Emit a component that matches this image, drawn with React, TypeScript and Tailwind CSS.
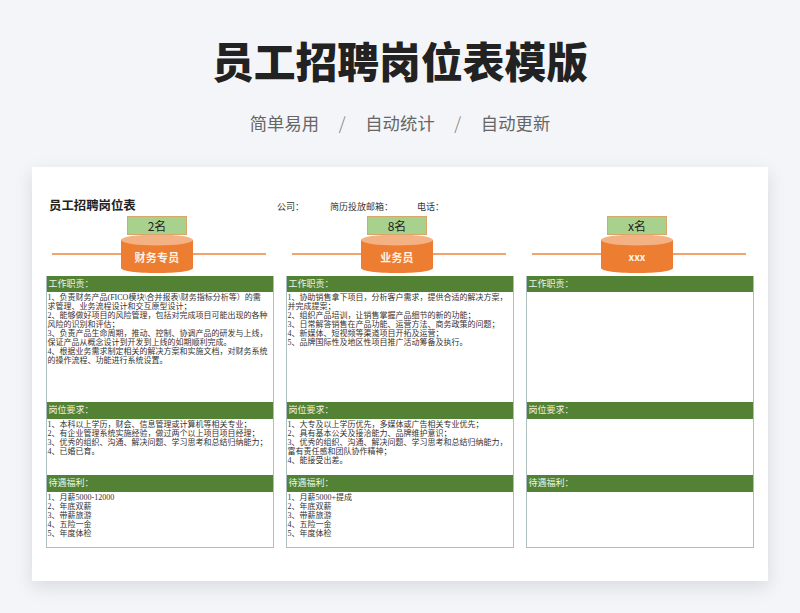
type Col = { count: string; name: string; duty: string[]; req: string[]; ben: string[]; nameClass: string };
const cols: Col[] = [
  {
    count: "2名",
    name: "财务专员",
    nameClass: "text-[11px] tracking-[0.2px]",
    duty: [
      "1、负责财务产品(FICO模块\\合并报表\\财务指标分析等）的需",
      "求管理、业务流程设计和交互原型设计；",
      "2、能够做好项目的风险管理，包括对完成项目可能出现的各种",
      "风险的识别和评估；",
      "3、负责产品生命周期，推动、控制、协调产品的研发与上线，",
      "保证产品从概念设计到开发到上线的如期顺利完成。",
      "4、根据业务需求制定相关的解决方案和实施文档，对财务系统",
      "的操作流程、功能进行系统设置。",
    ],
    req: [
      "1、本科以上学历，财会、信息管理或计算机等相关专业；",
      "2、有企业管理系统实施经验，做过两个以上项目项目经理；",
      "3、优秀的组织、沟通、解决问题、学习思考和总结归纳能力；",
      "4、已婚已育。",
    ],
    ben: ["1、月薪5000-12000", "2、年底双薪", "3、带薪旅游", "4、五险一金", "5、年度体检"],
  },
  {
    count: "8名",
    name: "业务员",
    nameClass: "text-[11px] tracking-[0.2px]",
    duty: [
      "1、协助销售拿下项目，分析客户需求，提供合适的解决方案，",
      "并完成提案；",
      "2、组织产品培训，让销售掌握产品细节的新的功能；",
      "3、日常解答销售在产品功能、运营方法、商务政策的问题；",
      "4、新媒体、短视频等渠道项目开拓及运营；",
      "5、品牌国际性及地区性项目推广活动筹备及执行。",
    ],
    req: [
      "1、大专及以上学历优先，多媒体或广告相关专业优先；",
      "2、具有基本公关及接洽能力、品牌维护意识；",
      "3、优秀的组织、沟通、解决问题、学习思考和总结归纳能力，",
      "富有责任感和团队协作精神；",
      "4、能接受出差。",
    ],
    ben: ["1、月薪5000+提成", "2、年底双薪", "3、带薪旅游", "4、五险一金", "5、年度体检"],
  },
  { count: "x名", name: "xxx", nameClass: "text-[10px]", duty: [], req: [], ben: [] },
];

const cellFont = { fontFamily: '"Liberation Serif", "Noto Sans CJK SC", serif' };

function Section({ title, lines, head, h, pad }: { title: string; lines: string[]; head: string; h: string; pad: string }) {
  return (
    <>
      <div
        className={`${head} bg-[#548235] text-[#eef3e6] text-[9px] leading-[17px] pl-[1.5px] whitespace-nowrap`}
        style={cellFont}
      >
        {title}
      </div>
      <div
        className={`${h} ${pad} bg-white pl-[0.5px] text-[#333] text-[8px] leading-[9px] whitespace-nowrap`}
        style={cellFont}
      >
        {lines.map((l) => (
          <div key={l}>{l}</div>
        ))}
      </div>
    </>
  );
}

function Cylinder({ label, labelClass }: { label: string; labelClass: string }) {
  return (
    <div className="relative w-[72px] h-[39px] shrink-0">
      <svg width="72" height="39" viewBox="0 0 72 39" className="block">
        <path d="M0 6 V34 C0 37 16 39 36 39 C56 39 72 37 72 34 V6 Z" fill="#ed7d31" />
        <ellipse cx="36" cy="6" rx="36" ry="5.5" fill="#f4b183" />
      </svg>
      <div
        className={`absolute left-0 right-0 top-[12px] h-[22px] leading-[22px] text-center font-bold text-[#fdf3ea] ${labelClass}`}
      >
        {label}
      </div>
    </div>
  );
}

export default function App() {
  return (
    <div
      className="w-[800px] h-[613px] overflow-hidden bg-[#f4f5f8]"
      style={{ fontFamily: '"Noto Sans CJK SC", "Noto Sans", sans-serif' }}
    >
      <div className="h-[167px] flex flex-col items-center">
        <h1 className="mt-[34px] h-[52px] leading-[52px] text-[41.8px] font-black text-[#222]">
          员工招聘岗位表模版
        </h1>
        <div className="mt-[25px] flex items-center h-[24px] text-[17.3px] leading-[24px] text-[#666] tracking-[0.1px]">
          <span>简单易用</span>
          <span className="mx-[19px] w-[8px] text-center font-light text-[#777]">/</span>
          <span>自动统计</span>
          <span className="mx-[19px] w-[8px] text-center font-light text-[#777]">/</span>
          <span>自动更新</span>
        </div>
      </div>

      <div className="ml-[32px] w-[736px] h-[414px] bg-white pt-[30px] pl-[14px] shadow-[0_6px_16px_rgba(90,100,120,0.18)]">
        <div className="h-[19px] flex items-start text-[#333]" style={cellFont}>
          <div className="ml-[3px] w-[228px] text-[12.4px] leading-[18px] font-bold text-[#222]">员工招聘岗位表</div>
          <div className="w-[53px] text-[9px] leading-[20px]">公司：</div>
          <div className="w-[87px] text-[9px] leading-[20px]">简历投放邮箱：</div>
          <div className="text-[9px] leading-[20px]">电话：</div>
        </div>
        <div className="flex gap-x-[12.5px]">
          {cols.map((c) => (
            <div key={c.name} className="w-[227.5px]">
              <div className="h-[60px] flex flex-col items-start">
                <div className="relative z-10 ml-[81px] w-[60px] h-[19px] bg-[#a9d18e] border border-[#d6a86a] text-center text-[12px] leading-[17px] text-[#222]">
                  {c.count}
                </div>
                <div className="pl-[6px] -mt-[1px] flex items-center">
                  <div className="w-[69px] h-[2px] bg-[#f0a36c]" />
                  <Cylinder label={c.name} labelClass={c.nameClass} />
                  <div className="w-[73px] h-[2px] bg-[#f0a36c]" />
                </div>
              </div>
              <div className="border-x border-b border-[#aebfc0] box-content">
                <Section title="工作职责：" lines={c.duty} head="h-[16px]" h="h-[110px]" pad="pt-[1px]" />
                <Section title="岗位要求：" lines={c.req} head="h-[17px]" h="h-[56px]" pad="pt-[1px]" />
                <Section title="待遇福利：" lines={c.ben} head="h-[17px]" h="h-[55px]" pad="pt-[1px]" />
              </div>
            </div>
          ))}
        </div>
      </div>
    </div>
  );
}
